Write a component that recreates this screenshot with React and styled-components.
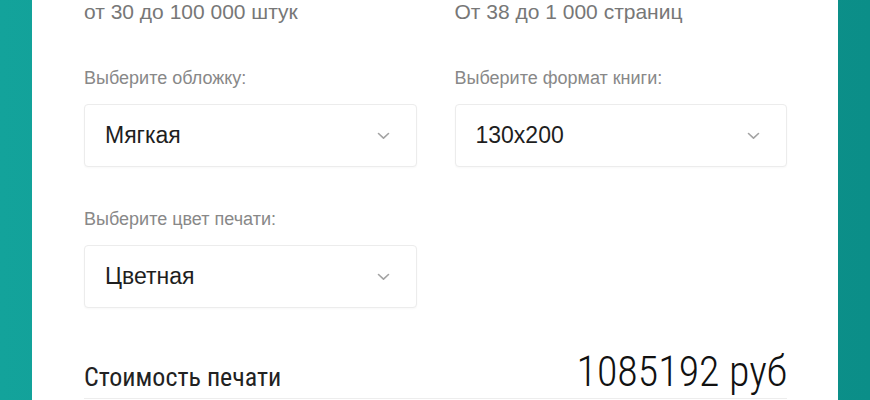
import React from 'react';
import { createGlobalStyle, styled } from 'styled-components';

const GlobalStyle = createGlobalStyle`
  html, body {
    margin: 0;
    padding: 0;
  }

  body {
    min-height: 400px;
    background: linear-gradient(90deg, #13a39b 0%, #0b8e88 100%);
    font-family: 'Liberation Sans', Arial, sans-serif;
    overflow: hidden;
  }
`;

const Chevron = () => (
  <svg width="13" height="8" viewBox="0 0 13 8" fill="none">
    <path
      d="M1.5 1.5L6.5 6.2L11.5 1.5"
      stroke="#a3a3a3"
      strokeWidth="1.6"
      strokeLinecap="round"
      strokeLinejoin="round"
    />
  </svg>
);

const Select = ({ value }) => (
  <StyledSelect>
    <SelectValue>{value}</SelectValue>
    <Chevron />
  </StyledSelect>
);

export default function App() {
  return (
    <>
      <GlobalStyle />
      <Card>
        <Grid>
          <Hint>от 30 до 100 000 штук</Hint>
          <Hint>От 38 до 1 000 страниц</Hint>

          <Field>
            <Label>Выберите обложку:</Label>
            <Select value="Мягкая" />
          </Field>
          <Field>
            <Label>Выберите формат книги:</Label>
            <Select value="130x200" />
          </Field>

          <Field>
            <Label>Выберите цвет печати:</Label>
            <Select value="Цветная" />
          </Field>
        </Grid>

        <CostRow>
          <CostLabel>Стоимость печати</CostLabel>
          <CostValue>1085192 руб</CostValue>
        </CostRow>
      </Card>
    </>
  );
}

const Card = styled.main`
  margin: 0 32px;
  min-height: 400px;
  padding: 0 51px 0 52px;
  box-sizing: border-box;
  background-color: #ffffff;
`;

const Grid = styled.div`
  display: grid;
  grid-template-columns: repeat(2, 1fr);
  column-gap: 38px;
  row-gap: 42px;
`;

const Hint = styled.p`
  margin: 0 0 2px;
  font-size: 21px;
  line-height: 24px;
  color: #777777;
`;

const Field = styled.div`
  display: flex;
  flex-direction: column;
  gap: 16px;
`;

const Label = styled.span`
  font-size: 18px;
  line-height: 20px;
  color: #888888;
`;

const StyledSelect = styled.div`
  display: flex;
  align-items: center;
  justify-content: space-between;
  height: 63px;
  padding: 0 26px 0 20px;
  box-sizing: border-box;
  border: 1px solid #ececec;
  border-radius: 4px;
  background-color: #ffffff;
  box-shadow: 0 1px 2px rgba(0, 0, 0, 0.03);
`;

const SelectValue = styled.span`
  font-size: 23px;
  color: #1e1e1e;
`;

const CostRow = styled.div`
  display: flex;
  align-items: baseline;
  justify-content: space-between;
  margin-top: 42px;
  padding-bottom: 4px;
  border-bottom: 1px solid #ededed;
  font-family: Roboto, 'Liberation Sans', sans-serif;
  font-stretch: 80%;
`;

const CostLabel = styled.span`
  font-size: 26px;
  line-height: 28px;
  color: #222222;
`;

const CostValue = styled.span`
  font-size: 42px;
  font-weight: 300;
  line-height: 44px;
  color: #111111;
`;
